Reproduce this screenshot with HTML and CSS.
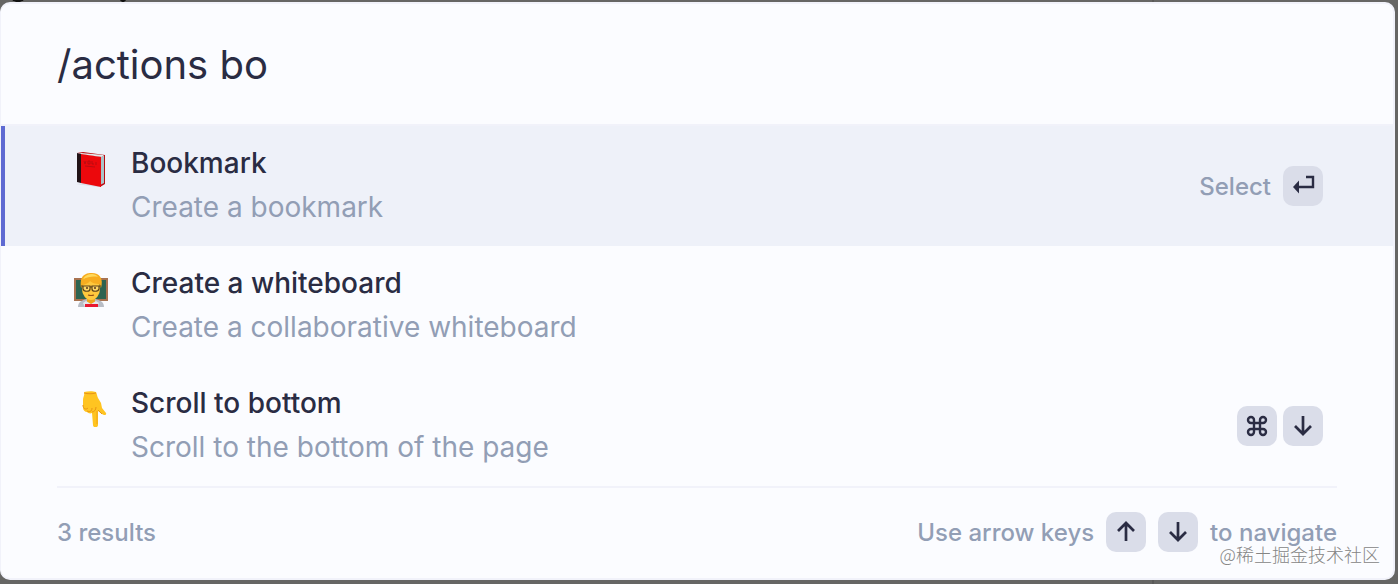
FILE: index.html
```html
<!DOCTYPE html>
<html lang="en">
<head>
<meta charset="utf-8">
<title>Command palette</title>
<link rel="stylesheet" href="styles.css">
</head>
<body>
<main class="palette">
  <div class="search">
    <input class="search-input" type="text" aria-label="Search actions" value="/actions bo">
  </div>
  <ul class="results">
    <li class="item item-active">
      <svg class="emoji" viewBox="0 0 36 36" aria-hidden="true">
        <path d="M3 33 25 36 31 33 30 30z" fill="#c9cedb" opacity=".6"/>
        <path d="M4 2 10 1 32 4 29 6z" fill="#b90d12"/>
        <path d="M8 2 31 4 29 6 7 3z" fill="#dfeaec"/>
        <path d="M28 6 31 5 31 32 28 34z" fill="#a9c4c8"/>
        <path d="M31 4 32 4 32 33 27 36 27 34 31 32z" fill="#b90d12"/>
        <path d="M4 2 8 3 8 32 4 31z" fill="#211317"/>
        <path d="M8 3 28 6 28 36 8 32z" fill="#ec080c"/>
        <path d="M11 10 12 13 13 10M15 10h2v3h-2zM19 10v3h2M23 11v3M12 15l10 1" fill="none" stroke="#a90d12" stroke-width=".7"/>
      </svg>
      <div class="item-text">
        <div class="item-title">Bookmark</div>
        <div class="item-desc">Create a bookmark</div>
      </div>
      <div class="item-keys">
        <span class="hint hint-select">Select</span>
        <kbd class="key"><svg class="key-icon" viewBox="0 0 24 24" role="img" aria-label="Enter"><path d="M15 3h7v10H7" fill="none" stroke="#2a2c43" stroke-width="2.4"/><path d="M8 6.500v13L2 13z" fill="#2a2c43"/></svg></kbd>
      </div>
    </li>
    <li class="item">
      <svg class="emoji" viewBox="0 0 36 36" aria-hidden="true">
        <path d="M1 7h34v23H1z" fill="#a87351"/>
        <path d="M3 9h30v19H3z" fill="#2d6350"/>
        <path d="M5 36c0-5 4-7 9-8h8c5 1 9 3 9 8z" fill="#b8bdc6"/>
        <path d="M14 25h8v6l-4 4-4-4z" fill="#eda51d"/>
        <path d="M13 30l5 3 5-3 3 2-2 4H12l-2-4z" fill="#e5e7ec"/>
        <path d="M12 33h13v3H12z" fill="#e91931"/>
        <ellipse cx="18" cy="18" rx="9" ry="11" fill="#ffc83d"/>
        <path d="M8 17C7 9 8 3 17 2c9-1 14 5 11 15l-2-4c-4 0-7-1-9-3-2 3-5 3-7 4z" fill="#f7ad20"/>
        <path d="M10 8c3-5 11-7 15-2-5-1-10 0-15 2z" fill="#ffd95c"/>
        <path d="M10 15h7v3c0 3-6 3-7 0zM19 15h7l0 3c-1 3-7 3-7 0zM17 16h2M8 15h2M26 15h2" fill="#ffd766" stroke="#5c431b" stroke-width="1.2"/>
        <circle cx="14" cy="17" r="1" fill="#54371c"/><circle cx="22" cy="17" r="1" fill="#54371c"/>
        <path d="M15 24q3 1 6 0" fill="none" stroke="#965116" stroke-width="1.2"/>
      </svg>
      <div class="item-text">
        <div class="item-title">Create a whiteboard</div>
        <div class="item-desc">Create a collaborative whiteboard</div>
      </div>
    </li>
    <li class="item">
      <svg class="emoji" viewBox="0 0 36 36" aria-hidden="true">
        <path d="M11 1c4-1 9-1 12 0 1 2 1 4 2 6l3 5 1 5 4 5c1 2-2 3-4 1l-4-3v14c0 3-5 3-5 0l-1-12c-2 1-4 0-5-1-2 0-4-2-4-4V9c0-3 2-5 1-8z" fill="#ffc421"/>
        <path d="M10 14c0 4 3 5 5 3m-1 3c2 1 5 1 5-3m0 4c2 0 4-2 4-5M11 2c4 1 8 1 12 0M25 19l4 4" fill="none" stroke="#e89417" stroke-width="1"/>
        <path d="M24 20v13" stroke="#f2a51b" stroke-width="1"/>
      </svg>
      <div class="item-text">
        <div class="item-title">Scroll to bottom</div>
        <div class="item-desc">Scroll to the bottom of the page</div>
      </div>
      <div class="item-keys">
        <kbd class="key"><svg class="key-icon" viewBox="0 0 24 24" role="img" aria-label="Command"><path d="M9 9V6a3 3 0 1 0-3 3h12a3 3 0 1 0-3-3v12a3 3 0 1 0 3-3H6a3 3 0 1 0 3 3z" fill="none" stroke="#2a2c43" stroke-width="2.4"/></svg></kbd>
        <kbd class="key"><svg class="key-icon" viewBox="0 0 24 24" role="img" aria-label="Down"><path d="M12 2v18M4 12l8 8 8-8" fill="none" stroke="#2a2c43" stroke-width="2.7"/></svg></kbd>
      </div>
    </li>
  </ul>
  <footer class="footer">
    <span class="hint">3 results</span>
    <div class="nav-help">
      <span class="hint">Use arrow keys</span>
      <kbd class="key"><svg class="key-icon" viewBox="0 0 24 24" role="img" aria-label="Up"><path d="M12 21V3M4 11l8-8 8 8" fill="none" stroke="#2a2c43" stroke-width="2.7"/></svg></kbd>
      <kbd class="key"><svg class="key-icon" viewBox="0 0 24 24" role="img" aria-label="Down"><path d="M12 2v18M4 12l8 8 8-8" fill="none" stroke="#2a2c43" stroke-width="2.7"/></svg></kbd>
      <span class="hint">to navigate</span>
    </div>
  </footer>
  <div class="watermark">@稀土掘金技术社区</div>
</main>
</body>
</html>
```
FILE: styles.css
```css
* {
  box-sizing: border-box;
}

body {
  margin: 0;
  padding: 2px 3px 4px 0;
  background:
    radial-gradient(ellipse 6px 2px at 18px 0, #111 80%, transparent) no-repeat,
    radial-gradient(ellipse 3px 2px at 123px 0, #111 80%, transparent) no-repeat,
    linear-gradient(#5a5a59, #5a5a59) 1152px 0 / 2px 100% no-repeat,
    #666664;
  font-family: Inter, "Liberation Sans", sans-serif;
  color: #2a2c43;
}

.palette {
  position: relative;
  border: 2px solid #f1f2fa;
  border-left-width: 1px;
  border-radius: 10px;
  background: #fbfcff;
}

.search {
  padding: 37px 56px 35px;
  border-bottom: 2px solid #f1f2fa;
}

.search-input {
  display: block;
  width: 100%;
  height: 48px;
  padding: 0;
  border: 0;
  outline: 0;
  background: transparent;
  color: inherit;
  font: 400 40px/48px Inter, "Liberation Sans", sans-serif;
}

.results {
  margin: 0;
  padding: 0;
  list-style: none;
}

.item {
  display: flex;
  align-items: flex-start;
  min-height: 120px;
  padding: 15px 70px 15px 68px;
  border-left: 4px solid transparent;
}

.item-active {
  border-left-color: #5e6ad2;
  background: #eef1f9;
}

.emoji {
  flex: none;
  width: 36px;
  height: 36px;
  margin: 10px 22px 0 0;
}

.item-text {
  flex: 1;
  font-size: 28px;
  line-height: 44px;
}

.item-title {
  font-weight: 500;
}

.item-desc {
  color: #929eb5;
}

.item-keys {
  display: flex;
  align-items: center;
  align-self: center;
  gap: 6px;
}

.hint {
  padding-top: 2px;
  color: #929eb5;
  font-size: 24px;
  font-weight: 500;
  line-height: 38px;
}

.hint-select {
  margin-right: 6px;
}

.key {
  display: flex;
  align-items: center;
  justify-content: center;
  width: 40px;
  height: 40px;
  border-radius: 10px;
  background: #dadde9;
}

.key-icon {
  width: 24px;
  height: 24px;
}

.footer {
  display: flex;
  align-items: center;
  justify-content: space-between;
  margin: 0 56px;
  padding: 24px 0 26px;
  border-top: 2px solid #f1f2fa;
}

.nav-help {
  display: flex;
  align-items: center;
  gap: 12px;
}

.watermark {
  position: absolute;
  right: 13px;
  bottom: 12px;
  color: #858585;
  font: 300 18px/24px "Noto Sans CJK SC", sans-serif;
  text-shadow: 1px 1px 1px #fff;
}
```
